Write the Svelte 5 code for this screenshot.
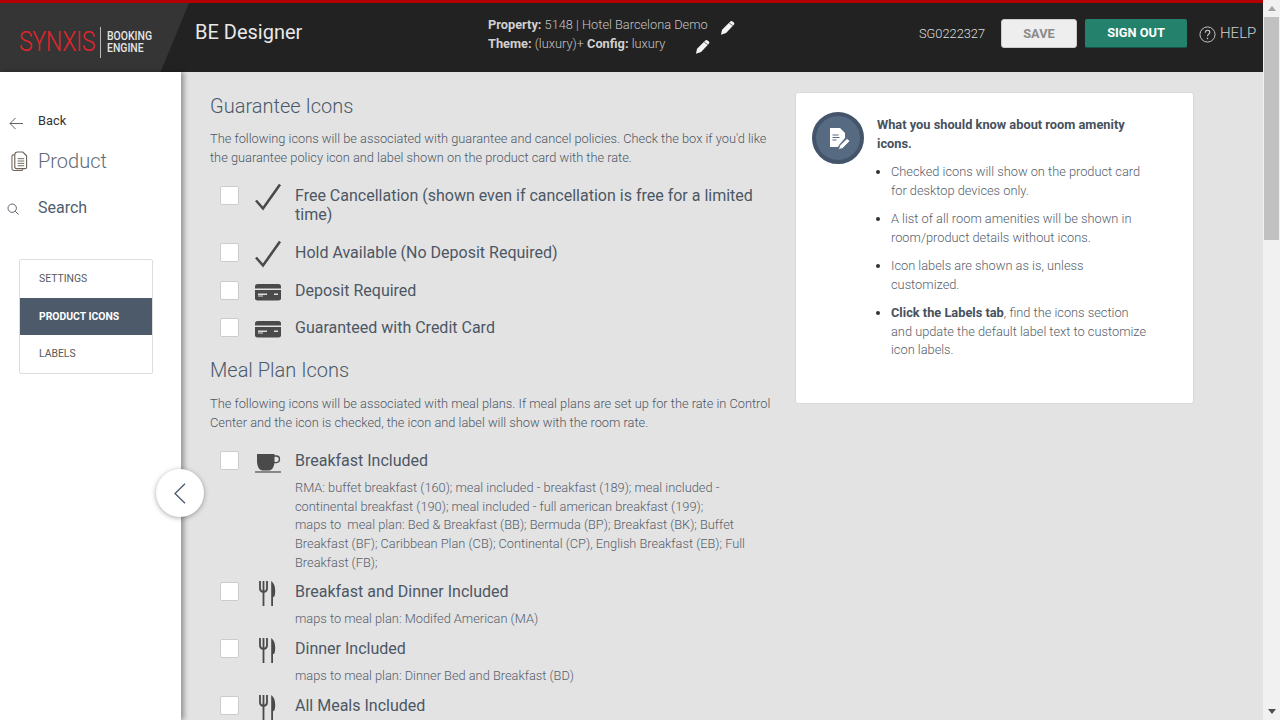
<script>
  const guarantee = [
    { label: 'Free Cancellation (shown even if cancellation is free for a limited time)', icon: 'check', cls: 'tall' },
    { label: 'Hold Available (No Deposit Required)', icon: 'check', cls: 'r2' },
    { label: 'Deposit Required', icon: 'card', cls: 'r3' },
    { label: 'Guaranteed with Credit Card', icon: 'card', cls: 'r3' }
  ];
  const meals = [
    {
      label: 'Breakfast Included', icon: 'cup',
      sub: ['RMA: buffet breakfast (160); meal included - breakfast (189); meal included - continental breakfast (190); meal included - full american breakfast (199);', 'maps to\u00a0 meal plan: Bed & Breakfast (BB); Bermuda (BP); Breakfast (BK); Buffet Breakfast (BF); Caribbean Plan (CB); Continental (CP), English Breakfast (EB); Full Breakfast (FB);']
    },
    { label: 'Breakfast and Dinner Included', icon: 'fork', sub: ['maps to meal plan: Modifed American (MA)'] },
    { label: 'Dinner Included', icon: 'fork', sub: ['maps to meal plan: Dinner Bed and Breakfast (BD)'] },
    { label: 'All Meals Included', icon: 'fork', sub: [] }
  ];
</script>

{#snippet pencil()}
  <svg class="pencil" viewBox="0 0 16 16" width="15" height="15">
    <path d="M11 1.600q1-1 2-.3l1.800 1.400q1 1 .2 2L6.500 13.800 1 15.800 2.200 10.400Z" fill="#f4f4f4" />
    <path d="M9.800 3.200 13.600 6" stroke="#222" stroke-width=".7" fill="none" />
  </svg>
{/snippet}

{#snippet icon(name)}
  {#if name === 'check'}
    <svg viewBox="0 0 28 28" width="28" height="28"><path d="M2 18.500 9 26.500 26 2.500" fill="none" stroke="#4a4a4a" stroke-width="2.600" /></svg>
  {:else if name === 'card'}
    <svg viewBox="0 0 28 28" width="28" height="28">
      <path d="M1 9.500q0-2.500 2.500-2.500h21q2.500 0 2.500 2.500v2H1Z" fill="#4a4a4a" />
      <path d="M1 13h26v8.500q0 2-2.500 2h-21q-2.500 0-2.500-2Z" fill="#4a4a4a" />
      <path d="M4 16.500h9v1.500H4Zm0 2h5v1H4Zm16-2h4v1.500h-4Z" fill="#ddd" />
    </svg>
  {:else if name === 'cup'}
    <svg viewBox="0 0 28 28" width="28" height="28">
      <path d="M3 7h17.500v8q-.5 7.500-5 8.500H8q-4.500-1-5-8.500Z" fill="#4a4a4a" />
      <path d="M20 9h2.500q3 .2 3 3.300t-3 3.300H20" fill="none" stroke="#4a4a4a" stroke-width="1.300" />
      <path d="M1 25h26" stroke="#4a4a4a" stroke-width="1.200" />
    </svg>
  {:else}
    <svg viewBox="0 0 28 28" width="28" height="28">
      <path d="M6 3v7.500q0 3 3.500 3.500M9.500 3v25M13 3v7.500q0 3-3.500 3.500" fill="none" stroke="#4a4a4a" stroke-width="1.800" />
      <path d="M17.200 3q4 3 4 9.500t-1.600 6.500h-.6v9h-1.800Z" fill="#4a4a4a" />
    </svg>
  {/if}
{/snippet}

<div class="viewport">
  <div class="page">
    <header>
      <div class="brand">
        <span class="synxis">SYNXIS</span>
        <span class="rule"></span>
        <span class="booking">BOOKING<br />ENGINE</span>
      </div>
      <h1>BE Designer</h1>
      <div class="meta">
        <div class="line1"><b>Property:</b> 5148 | Hotel Barcelona Demo {@render pencil()}</div>
        <div class="line2"><b>Theme:</b> (luxury)+ <b>Config:</b> luxury {@render pencil()}</div>
      </div>
      <span class="user">SG0222327</span>
      <button class="save">SAVE</button>
      <button class="signout">SIGN OUT</button>
      <span class="help">
        <svg viewBox="0 0 18 18" width="17" height="17"><circle cx="9" cy="9" r="8" fill="none" stroke="#ccc" stroke-width="1" /><path d="M6.700 7q.1-2.500 2.400-2.500t2.300 2.100c0 2-2.400 1.900-2.400 4.200" fill="none" stroke="#ccc" stroke-width="1.200" /><circle cx="9" cy="13.300" r=".8" fill="#ccc" /></svg>
        HELP
      </span>
    </header>

    <div class="body">
      <aside>
        <a class="back">
          <svg viewBox="0 0 16 14" width="15" height="13"><path d="M7 1 1 7l6 6M1 7h14" fill="none" stroke="#555" stroke-width="1" /></svg>
          <span>Back</span>
        </a>
        <a class="product">
          <svg viewBox="0 0 18 22" width="17" height="21">
            <path d="M3.500 4H2.500Q1 4 1 5.500v13q0 2 2 2h8q1.500 0 1.500-1.500" fill="none" stroke="#6b6259" stroke-width="1.100" />
            <path d="M7 1h5.500L16.500 5v12q0 1.500-1.500 1.500H6q-2 0-2-2V4q0-3 3-3Z" fill="none" stroke="#6b6259" stroke-width="1.200" />
            <path d="M7 8h7M7 10.500h7M7 13h7M7 15.500h7" stroke="#6b6259" stroke-width="1" />
          </svg>
          <span>Product</span>
        </a>
        <a class="search">
          <svg viewBox="0 0 12 12" width="12" height="12"><circle cx="5.200" cy="5.200" r="4.200" fill="none" stroke="#5a6570" stroke-width="1" /><path d="m8.200 8.200 3.300 3.300" stroke="#5a6570" stroke-width="1" /></svg>
          <span>Search</span>
        </a>
        <nav>
          <a>SETTINGS</a>
          <a class="active">PRODUCT ICONS</a>
          <a>LABELS</a>
        </nav>
        <button class="collapse" aria-label="Collapse">
          <svg viewBox="0 0 12 21" width="12" height="21"><path d="M11 .8 1 10.500l10 9.700" fill="none" stroke="#4a5a6a" stroke-width="1.300" /></svg>
        </button>
      </aside>

      <main>
        <div class="col">
          <h2>Guarantee Icons</h2>
          <p class="intro">The following icons will be associated with guarantee and cancel policies. Check the box if you'd like the guarantee policy icon and label shown on the product card with the rate.</p>
          {#each guarantee as g}
            <div class="row {g.cls}">
              <span class="box"></span>
              <span class="ic">{@render icon(g.icon)}</span>
              <span class="label">{g.label}</span>
            </div>
          {/each}

          <h2 class="second">Meal Plan Icons</h2>
          <p class="intro">The following icons will be associated with meal plans. If meal plans are set up for the rate in Control Center and the icon is checked, the icon and label will show with the room rate.</p>
          {#each meals as m}
            <div class="meal">
              <div class="row">
                <span class="box"></span>
                <span class="ic">{@render icon(m.icon)}</span>
                <span class="label">{m.label}</span>
              </div>
              {#if m.sub.length}
                <div class="sub">
                  {#each m.sub as s}<div>{s}</div>{/each}
                </div>
              {/if}
            </div>
          {/each}
        </div>

        <section class="card">
          <div class="head">
            <span class="badge">
              <svg viewBox="0 0 24 24" width="24" height="24">
                <path d="M4 2h10l5 5v5l-6 7-1 2H4Z" fill="#fff" />
                <path d="M6.500 9h6M6.500 11.500h7M6.500 14h4" stroke="#566a82" stroke-width="1" />
                <path d="m21 12.500 3 2.500-7.500 7.500-4 1 1.200-4Z" fill="#fff" stroke="#566a82" stroke-width=".8" />
              </svg>
            </span>
            <h3>What you should know about room amenity icons.</h3>
          </div>
          <ul>
            <li>Checked icons will show on the product card for desktop devices only.</li>
            <li>A list of all room amenities will be shown in room/product details without icons.</li>
            <li>Icon labels are shown as is, unless customized.</li>
            <li><b>Click the Labels tab</b>, find the icons section and update the default label text to customize icon labels.</li>
          </ul>
        </section>
      </main>
    </div>
  </div>

  <div class="scrollbar">
    <span class="up"></span>
    <span class="thumb"></span>
    <span class="down"></span>
  </div>
</div>

<style>
  :global(body) { margin: 0; overflow: hidden; font-family: Roboto, "Liberation Sans", sans-serif; }
  .viewport { display: flex; width: 1280px; height: 720px; overflow: hidden; }
  .page { width: 1263px; height: 720px; display: flex; flex-direction: column; flex: none; overflow: hidden; background: #e3e3e3; }

  header {
    height: 72px; flex: none; box-sizing: border-box; border-top: 3.500px solid #b40000;
    background: #222; display: flex; align-items: center; color: #ddd; font-size: 12.800px;
  }
  .brand {
    width: 189px; height: 100%; flex: none; box-sizing: border-box; background: #353535;
    clip-path: polygon(0 0, 100% 0, 85% 100%, 0 100%);
    display: flex; align-items: center; padding: 9px 0 0 19px;
  }
  .synxis { display: block; width: 75px; flex: none; color: #e2242c; font-size: 28px; font-weight: 300; line-height: 30px; transform: scaleX(.83); transform-origin: left; letter-spacing: -.5px; }
  .rule { width: 1px; height: 31px; background: #bbb; margin-left: 6px; flex: none; }
  .booking { color: #e4e4e4; font-size: 12px; font-weight: 500; line-height: 12px; margin-left: 6px; transform: scaleX(.87); transform-origin: left; }
  h1 { margin: 0 0 11px 6px; font-size: 20px; font-weight: 400; color: #e8e8e8; width: 293px; flex: none; }
  .meta { width: 431px; flex: none; font-size: 12.800px; line-height: 18.700px; color: #c4c4c4; font-weight: 300; margin-bottom: 6px; white-space: nowrap; }
  .meta b { font-weight: 700; color: #d0d0d0; }
  .line1 .pencil { margin-left: 9px; }
  .line2 .pencil { margin-left: 27px; }
  .pencil { vertical-align: -6px; }
  .user { width: 82px; flex: none; font-size: 12.800px; color: #ddd; font-weight: 300; margin-bottom: 8px; }
  button { font-family: inherit; cursor: pointer; }
  .save {
    width: 76px; height: 29px; margin-bottom: 9px; background: #eee; color: #8a8a8a; border: 1px solid #ccc; border-radius: 3px;
    font-size: 12.800px; font-weight: 700; padding: 0;
  }
  .signout {
    width: 102px; height: 29px; margin: 0 0 9px 8px; background: #24816b; color: #fff; border: 0; border-bottom: 1px solid #16564a; border-radius: 2px;
    font-size: 12.800px; font-weight: 700; padding: 0;
  }
  .help { display: flex; align-items: center; gap: 4px; margin: 0 0 9px 12px; font-size: 15px; font-weight: 300; color: #d0d0d0; }
  .help svg { margin-top: 3px; }

  .body { flex: 1; display: flex; min-height: 0; }
  aside {
    width: 181px; flex: none; background: #fff; box-shadow: 3px 0 5px rgba(0,0,0,.35); position: relative; z-index: 1;
    box-sizing: border-box;
  }
  aside a { display: block; }
  .back { display: flex; align-items: center; height: 18px; margin-top: 42px; padding-left: 9px; font-size: 12.800px; color: #333; }
  .back span { margin-left: 14px; margin-top: -6px; }
  .product { display: flex; align-items: center; margin-top: 16px; height: 26px; padding-left: 11px; font-size: 20px; font-weight: 300; color: #5f6b77; }
  .product span { margin-left: 10px; }
  .search { display: flex; align-items: center; margin-top: 23px; height: 20px; padding-left: 7px; font-size: 16px; color: #50606f; }
  .search span { margin-left: 19px; }
  .search svg { margin-top: 4px; }
  nav { margin: 42px 0 0 19px; width: 134px; box-sizing: border-box; border: 1px solid #ddd; border-radius: 2px; }
  nav a { height: 37.500px; line-height: 37px; padding-left: 19px; font-size: 10.400px; color: #5a5a5a; }
  nav a.active { background: #4c5a6a; color: #fff; font-weight: 700; }
  .collapse {
    position: absolute; left: 156px; top: 397px; width: 48px; height: 48px; border-radius: 50%; border: 0; background: #fff;
    box-shadow: 0 1px 5px rgba(0,0,0,.35); display: flex; align-items: center; justify-content: center; padding: 0;
  }

  main { flex: 1; display: flex; align-items: flex-start; padding: 20px 0 0 29px; min-width: 0; }
  .col { width: 562px; flex: none; color: #4c5763; }
  h2 { margin: 1px 0 0; font-size: 20px; font-weight: 300; line-height: 26px; color: #4a5a6a; }
  h2.second { margin-top: 15px; }
  .intro { margin: 11px 0 0; font-size: 12.800px; line-height: 18.700px; font-weight: 300; color: #4c5763; }
  .second + .intro { margin-top: 12px; }
  .row { display: flex; align-items: flex-start; padding-left: 10px; margin-top: 15px; }
  .row.tall { margin-top: 16px; }
  .row.r2 { margin-top: 16px; }
  .row.r3 { margin-top: 10.500px; }
  .box { width: 19px; height: 19px; flex: none; box-sizing: border-box; background: #fff; border: 1px solid #ccc; border-radius: 2px; margin-top: 3px; }
  .ic { width: 28px; height: 28px; flex: none; margin: -1px 0 0 15px; }
  .ic svg { display: block; overflow: visible; }
  .label { margin-left: 13px; font-size: 16px; line-height: 18.500px; padding-top: 4px; }
  .meal { margin-top: 7px; }
  .intro + .meal { margin-top: 15px; }
  .meal .row { margin-top: 0; }
  .sub { margin: 4px 0 0 85px; font-size: 12.800px; line-height: 18.700px; font-weight: 300; color: #55606c; }

  .card {
    width: 399px; height: 312px; flex: none; box-sizing: border-box; margin-left: 23px; background: #fff; border: 1px solid #d8d8d8; border-radius: 3px;
    padding: 19px 45px 0 16px; color: #55606c;
  }
  .head { display: flex; gap: 13px; }
  .badge { width: 52px; height: 52px; flex: none; box-sizing: border-box; border-radius: 50%; background: #566a82; border: 4px solid #44546a; display: flex; align-items: center; justify-content: center; }
  h3 { margin: 4px 0 0; font-size: 12.800px; line-height: 18.700px; font-weight: 700; color: #47515c; }
  ul { margin: -1px 0 0; padding: 0 0 0 79px; font-size: 12.800px; line-height: 18.700px; font-weight: 300; list-style: disc; }
  ul b { font-weight: 700; color: #47515c; }
  li { margin-bottom: 9.600px; }
  li::marker { color: #333; }

  .scrollbar { width: 17px; flex: none; background: #f1f1f1; display: flex; flex-direction: column; align-items: center; }
  .up { margin-top: 6px; width: 0; height: 0; border: 4px solid transparent; border-top: 0; border-bottom: 5px solid #a3a3a3; }
  .thumb { width: 15px; height: 223px; margin-top: 6px; background: #c1c1c1; }
  .down { margin-top: auto; margin-bottom: 6px; width: 0; height: 0; border: 4px solid transparent; border-bottom: 0; border-top: 5px solid #505050; }
</style>
